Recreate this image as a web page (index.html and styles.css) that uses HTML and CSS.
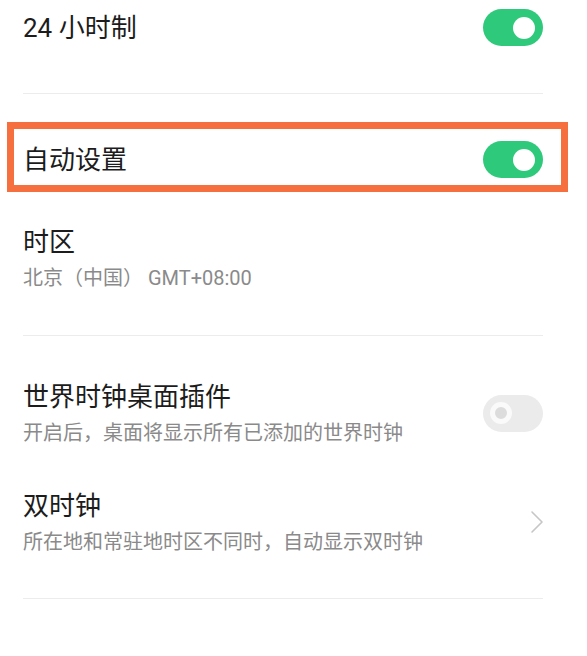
FILE: index.html
```html
<!DOCTYPE html>
<html>
<head>
    <meta charset="utf-8">
    <title>日期与时间</title>
    <link rel="stylesheet" href="styles.css">
</head>
<body>
    <div class="settings">
        <div class="row first">
            <div class="title">24 小时制</div>
            <div class="switch on"><span class="knob"></span></div>
        </div>
        <div class="divider top-gap"></div>

        <!-- 标注框 -->
        <div class="row highlight">
            <div class="title">自动设置</div>
            <div class="switch on"><span class="knob"></span></div>
        </div>

        <div class="row item zone">
            <div class="text">
                <div class="title">时区</div>
                <div class="sub">北京（中国） GMT+08:00</div>
            </div>
        </div>
        <div class="divider zone-gap"></div>

        <div class="row item world">
            <div class="text">
                <div class="title">世界时钟桌面插件</div>
                <div class="sub">开启后，桌面将显示所有已添加的世界时钟</div>
            </div>
            <div class="switch off"><span class="knob"></span></div>
        </div>

        <div class="row item dual">
            <div class="text">
                <div class="title">双时钟</div>
                <div class="sub">所在地和常驻地时区不同时，自动显示双时钟</div>
            </div>
            <svg class="chevron" width="14" height="24" viewBox="0 0 14 24">
                <polyline points="2,2 12,12 2,22" fill="none" stroke="#c6c6c6" stroke-width="1.6" stroke-linecap="round" stroke-linejoin="round"/>
            </svg>
        </div>
        <div class="divider bottom-gap"></div>
    </div>
</body>
</html>
```

FILE: styles.css
```css
body {
    margin: 0;
    padding: 0;
    background-color: #ffffff;
    font-family: Roboto, "Noto Sans CJK SC", sans-serif;
    color: #1c1c1c;
}

.settings {
    padding: 0 44px 0 23px;
}

.row {
    display: flex;
    align-items: center;
    justify-content: space-between;
}

.row.first {
    height: 55px;
}

.title {
    font-size: 26px;
    line-height: 36px;
    color: #1c1c1c;
}

.sub {
    margin-top: 4px;
    font-size: 20px;
    line-height: 28px;
    color: #8a8a8a;
}

.divider {
    height: 1px;
    background-color: #ececec;
}

.divider.top-gap {
    margin-top: 38px;
}

.divider.zone-gap {
    margin-top: 43px;
}

.divider.bottom-gap {
    margin-top: 42px;
}

/* 橙色标注框 */
.row.highlight {
    margin: 28px -25px 0 -16px;
    padding: 12px 18px 7px 9px;
    border: 7px solid #f66f3e;
}

.row.zone {
    margin-top: 32px;
}

.row.world {
    padding-top: 43px;
}

.row.dual {
    margin-top: 41px;
}

.switch {
    width: 60px;
    height: 37px;
    border-radius: 19px;
    display: flex;
    align-items: center;
    box-sizing: border-box;
    flex-shrink: 0;
}

.switch.on {
    background-color: #2ec97a;
    justify-content: flex-end;
    padding: 0 8px;
}

.switch.off {
    background-color: #ebebeb;
    justify-content: flex-start;
    padding: 0 7px;
}

.knob {
    width: 22px;
    height: 22px;
    border-radius: 50%;
    background-color: #ffffff;
    box-sizing: border-box;
}

.switch.off .knob {
    background-color: #dcdcdc;
    border: 5px solid #fafafa;
}

.chevron {
    margin-right: -1px;
    flex-shrink: 0;
}
```
